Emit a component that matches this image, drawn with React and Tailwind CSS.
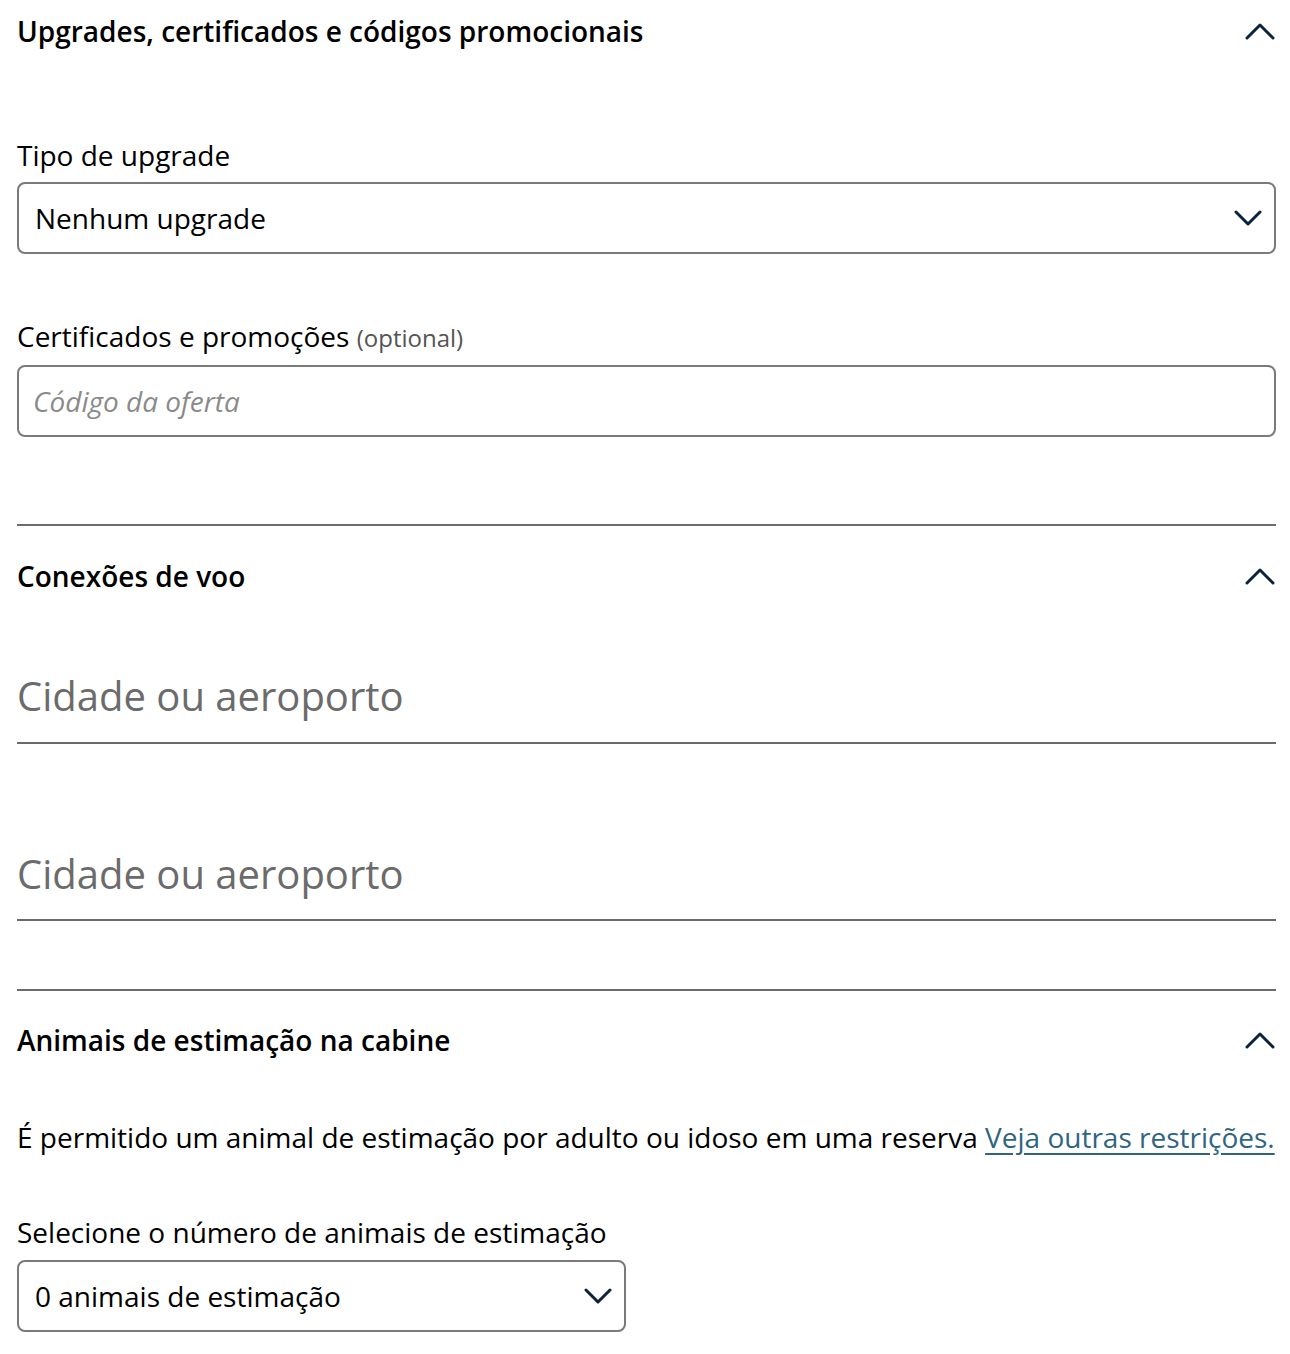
import React from "react";

const ChevronUp = () => (
  <svg width="30" height="18" viewBox="0 0 30 18" fill="none" className="text-[#0c2340]">
    <path d="M2 16 L15 3 L28 16" stroke="currentColor" strokeWidth="3" strokeLinecap="round" strokeLinejoin="round" />
  </svg>
);

const ChevronDown = () => (
  <svg width="28" height="16" viewBox="0 0 28 16" fill="none" className="text-[#0c2340]">
    <path d="M2 2 L14 14 L26 2" stroke="currentColor" strokeWidth="3" strokeLinecap="round" strokeLinejoin="round" />
  </svg>
);

const SectionHeader = ({ title }) => (
  <div className="flex items-center justify-between h-[36px]">
    <h2 className="text-[28px] font-semibold leading-[36px] text-black">{title}</h2>
    <div className="pr-[1px]">
      <ChevronUp />
    </div>
  </div>
);

const SelectBox = ({ value, className = "" }) => (
  <div className={`flex items-center justify-between h-[72px] border-2 border-[#7a7a7a] rounded-[8px] pl-[16px] pr-[12px] ${className}`}>
    <span className="text-[28px] leading-[36px] text-black">{value}</span>
    <ChevronDown />
  </div>
);

const CityField = ({ className = "" }) => (
  <div className={`border-b-2 border-[#6b6b6b] ${className}`}>
    <span className="block text-[40px] leading-[54px] text-[#6b6b6b]">Cidade ou aeroporto</span>
  </div>
);

export default function App() {
  return (
    <div className="bg-white min-h-screen pl-[17px] pr-[14px] font-['Open_Sans',sans-serif]">
      {/* Upgrades */}
      <section className="pt-[13px] pb-[87px]">
        <SectionHeader title="Upgrades, certificados e códigos promocionais" />

        <div className="mt-[88px]">
          <label className="block text-[28px] leading-[36px] text-black">Tipo de upgrade</label>
          <SelectBox value="Nenhum upgrade" className="mt-[9px]" />
        </div>

        <div className="mt-[64px]">
          <label className="block text-[28px] leading-[36px] text-black">
            Certificados e promoções <span className="text-[24px] text-[#555]">(optional)</span>
          </label>
          <div className="mt-[9px] flex items-center h-[72px] border-2 border-[#7a7a7a] rounded-[8px] px-[14px]">
            <span className="text-[28px] leading-[36px] italic text-[#8a8a8a]">Código da oferta</span>
          </div>
        </div>
      </section>

      {/* Conexões */}
      <section className="border-t-2 border-[#6b6b6b] pt-[32px] pb-[68px]">
        <SectionHeader title="Conexões de voo" />
        <CityField className="mt-[75px] pb-[19px]" />
        <CityField className="mt-[103px] pb-[18px]" />
      </section>

      {/* Animais */}
      <section className="border-t-2 border-[#6b6b6b] pt-[31px] pb-[22px]">
        <SectionHeader title="Animais de estimação na cabine" />
        <p className="mt-[61px] text-[28px] leading-[36px] text-black whitespace-nowrap">
          É permitido um animal de estimação por adulto ou idoso em uma reserva{" "}
          <a href="#" className="text-[#2f6582] underline underline-offset-[5px]">Veja outras restrições.</a>
        </p>
        <div className="mt-[59px]">
          <label className="block text-[28px] leading-[36px] text-black">Selecione o número de animais de estimação</label>
          <SelectBox value="0 animais de estimação" className="mt-[10px] w-[609px]" />
        </div>
      </section>
    </div>
  );
}
